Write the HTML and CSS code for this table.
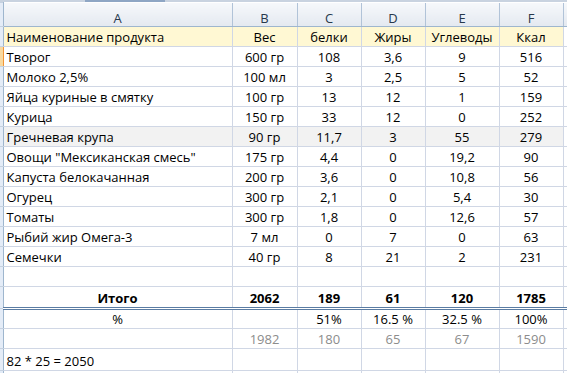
FILE: index.html
```html
<!DOCTYPE html>
<html lang="ru">
<head>
<meta charset="utf-8">
<link rel="stylesheet" href="styles.css">
</head>
<body>
<div class="topstrip"><span class="tab"></span></div>
<table class="sheet">
  <colgroup>
    <col class="c-rh"><col class="c-a"><col class="c-b"><col class="c-c"><col class="c-d"><col class="c-e"><col class="c-f"><col class="c-g">
  </colgroup>
  <tr class="colhead"><th class="rh"></th><th>A</th><th>B</th><th>C</th><th>D</th><th>E</th><th>F</th><th class="g"></th></tr>
  <tr class="yellow"><th class="rh"></th><td class="l">Наименование продукта</td><td>Вес</td><td>белки</td><td>Жиры</td><td>Углеводы</td><td>Ккал</td><td class="g"></td></tr>
  <tr><th class="rh sel"></th><td class="l">Творог</td><td>600 гр</td><td>108</td><td>3,6</td><td>9</td><td>516</td><td class="g"></td></tr>
  <tr><th class="rh"></th><td class="l">Молоко 2,5%</td><td>100 мл</td><td>3</td><td>2,5</td><td>5</td><td>52</td><td class="g"></td></tr>
  <tr><th class="rh"></th><td class="l">Яйца куриные в смятку</td><td>100 гр</td><td>13</td><td>12</td><td>1</td><td>159</td><td class="g"></td></tr>
  <tr><th class="rh"></th><td class="l">Курица</td><td>150 гр</td><td>33</td><td>12</td><td>0</td><td>252</td><td class="g"></td></tr>
  <tr class="grey"><th class="rh"></th><td class="l">Гречневая крупа</td><td>90 гр</td><td>11,7</td><td>3</td><td>55</td><td>279</td><td class="g"></td></tr>
  <tr><th class="rh"></th><td class="l">Овощи "Мексиканская смесь"</td><td>175 гр</td><td>4,4</td><td>0</td><td>19,2</td><td>90</td><td class="g"></td></tr>
  <tr><th class="rh"></th><td class="l">Капуста белокачанная</td><td>200 гр</td><td>3,6</td><td>0</td><td>10,8</td><td>56</td><td class="g"></td></tr>
  <tr><th class="rh"></th><td class="l">Огурец</td><td>300 гр</td><td>2,1</td><td>0</td><td>5,4</td><td>30</td><td class="g"></td></tr>
  <tr><th class="rh"></th><td class="l">Томаты</td><td>300 гр</td><td>1,8</td><td>0</td><td>12,6</td><td>57</td><td class="g"></td></tr>
  <tr><th class="rh"></th><td class="l">Рыбий жир Омега-3</td><td>7 мл</td><td>0</td><td>7</td><td>0</td><td>63</td><td class="g"></td></tr>
  <tr><th class="rh"></th><td class="l">Семечки</td><td>40 гр</td><td>8</td><td>21</td><td>2</td><td>231</td><td class="g"></td></tr>
  <tr class="blank"><th class="rh"></th><td></td><td></td><td></td><td></td><td></td><td></td><td class="g"></td></tr>
  <tr class="total"><th class="rh"></th><td>Итого</td><td>2062</td><td>189</td><td>61</td><td>120</td><td>1785</td><td class="g"></td></tr>
  <tr class="pct"><th class="rh"></th><td>%</td><td></td><td>51%</td><td>16.5 %</td><td>32.5 %</td><td>100%</td><td class="g"></td></tr>
  <tr class="muted"><th class="rh"></th><td></td><td>1982</td><td>180</td><td>65</td><td>67</td><td>1590</td><td class="g"></td></tr>
  <tr class="note"><th class="rh"></th><td class="l">82 * 25 = 2050</td><td></td><td></td><td></td><td></td><td></td><td class="g"></td></tr>
  <tr class="stub"><th class="rh"></th><td></td><td></td><td></td><td></td><td></td><td></td><td class="g"></td></tr>
</table>
</body>
</html>
```
FILE: styles.css
```css
html, body {
  margin: 0;
  padding: 0;
  background: #ffffff;
  overflow: hidden;
}
body {
  width: 567px;
  height: 373px;
  font-family: "Open Sans", "Noto Sans", sans-serif;
  font-size: 13px;
  color: #000;
}
.topstrip {
  height: 2px;
  background: #c9d3e0;
  position: relative;
}
.tab {
  position: absolute;
  left: 85px;
  width: 80px;
  top: 0;
  height: 2px;
  background: #8ea6c4;
}
.sheet {
  border-collapse: collapse;
  table-layout: fixed;
  width: 580px;
}
.c-rh { width: 3px; }
.c-a { width: 229px; }
.c-b { width: 65px; }
.c-c { width: 64px; }
.c-d { width: 64px; }
.c-e { width: 74px; }
.c-f { width: 64px; }
.c-g { width: 17px; }
.sheet td, .sheet th {
  box-sizing: border-box;
  height: 20px;
  padding: 2px 2px 0;
  border: 1px solid #d0d7e5;
  text-align: center;
  white-space: nowrap;
  overflow: hidden;
  line-height: 17px;
  font-weight: normal;
}
.sheet th.rh {
  padding: 0;
  border-left: none;
  background: #e4ecf7;
  border-right: 1px solid #9eb6ce;
  border-top: 1px solid #c5d1e0;
  border-bottom: 1px solid #c5d1e0;
}
.sheet th.rh.sel {
  background: #f9d99f;
  border-right: 1px solid #f29536;
}
.colhead th {
  height: 24px;
  padding-top: 7px;
  line-height: 14px;
  background: linear-gradient(#f6f8fb, #e4e9f0);
  border: 1px solid #b1c3d8;
  border-top: none;
  border-bottom: 1px solid #9eb6ce;
  color: #27384c;
  font-size: 13px;
}
.sheet td.l {
  text-align: left;
  padding-left: 3px;
}
.yellow td {
  background: #fff8d3;
}
.grey td {
  background: #f2f2f2;
}
.total td {
  font-weight: bold;
  border-top: 1px solid #5a7ca3;
  border-bottom: 3px double #5a7ca3;
  height: 22px;
  padding-top: 3px;
}
.pct td {
  height: 20px;
  padding-top: 1px;
}
.muted td {
  color: #8c8c8c;
  height: 20px;
}
.note td {
  height: 21px;
  padding-top: 4px;
}
.sheet .stub td, .sheet .stub th {
  height: 4px;
  padding: 0;
  line-height: 0;
}
.sheet td.g {
  border-right: none;
  background: #fff;
}
```
